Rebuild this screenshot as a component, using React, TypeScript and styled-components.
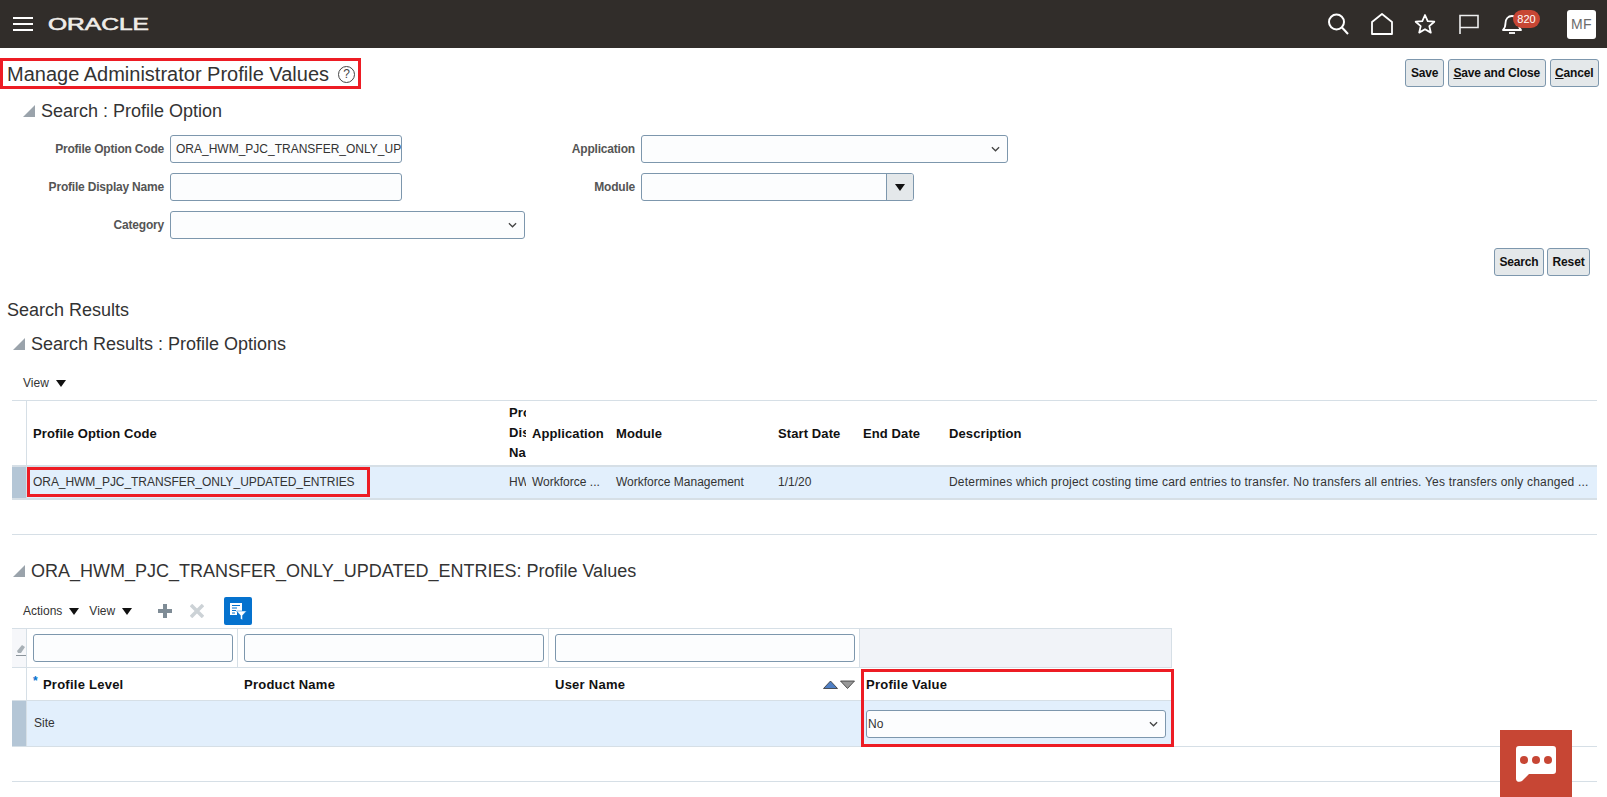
import React from "react";
import styled, { createGlobalStyle } from "styled-components";

const GlobalStyle = createGlobalStyle`
  html, body {
    margin: 0;
    padding: 0;
    background: #fff;
    font-family: "Liberation Sans", Arial, sans-serif;
    color: #333;
  }
  * { box-sizing: border-box; }
`;

const Triangle = () => (
  <DisclosureIcon viewBox="0 0 12 12">
    <polygon points="0,12 12,12 12,0" fill="#9aa3ab" />
  </DisclosureIcon>
);

const Chevron = () => (
  <ChevronIcon viewBox="0 0 10 6">
    <path d="M1 1l4 4 4-4" fill="none" stroke="#444" strokeWidth="1.4" />
  </ChevronIcon>
);

const Caret = () => (
  <CaretIcon viewBox="0 0 10 7">
    <polygon points="0,0 10,0 5,7" fill="#111" />
  </CaretIcon>
);

const App: React.FC = () => {
  return (
    <Page>
      <GlobalStyle />
      <Header>
        <Burger viewBox="0 0 20 14">
          <path d="M0 1h20M0 7h20M0 13h20" stroke="#fff" strokeWidth="1.8" />
        </Burger>
        <Logo viewBox="0 0 100 14">
          <text
            x="0"
            y="13"
            textLength="101"
            lengthAdjust="spacingAndGlyphs"
            fontFamily="Liberation Sans, Arial, sans-serif"
            fontSize="17"
            fill="#efece8"
            stroke="#efece8"
            strokeWidth=".6"
          >
            ORACLE
          </text>
        </Logo>
        <HeaderIcons>
          <HeaderIcon viewBox="0 0 22 22">
            <circle cx="9.5" cy="9" r="7.5" fill="none" stroke="#fff" strokeWidth="2" />
            <path d="M15 14.5l6 6.5" stroke="#fff" strokeWidth="2" />
          </HeaderIcon>
          <HeaderIcon viewBox="0 0 22 22">
            <path d="M1 21V9l10-8 10 8v12z" fill="none" stroke="#fff" strokeWidth="1.8" strokeLinejoin="round" />
          </HeaderIcon>
          <HeaderIcon viewBox="0 0 22 22">
            <path
              d="M11 2l2.7 6.1 6.6.6-5 4.4 1.5 6.5L11 16.200l-5.800 3.400 1.500-6.500-5-4.400 6.600-.6z"
              fill="none"
              stroke="#fff"
              strokeWidth="1.8"
              strokeLinejoin="round"
            />
          </HeaderIcon>
          <HeaderIcon viewBox="0 0 22 22">
            <path d="M2 21V2.500h18v12H2" fill="none" stroke="#eee" strokeWidth="1.6" />
          </HeaderIcon>
          <BellSlot>
            <HeaderIcon viewBox="0 0 22 22">
              <path
                d="M2 17c2-2 2.500-3.500 2.500-7 0-4 2.500-7 6.500-7s6.500 3 6.500 7c0 3.500.5 5 2.500 7z"
                fill="none"
                stroke="#fff"
                strokeWidth="1.8"
                strokeLinejoin="round"
              />
              <path d="M8 20h6" stroke="#fff" strokeWidth="1.8" />
            </HeaderIcon>
            <Badge>820</Badge>
          </BellSlot>
        </HeaderIcons>
        <Avatar>MF</Avatar>
      </Header>

      <TitleBar>
        <TitleBox>
          <Title>Manage Administrator Profile Values</Title>
          <HelpIcon>?</HelpIcon>
        </TitleBox>
        <ButtonGroup>
          <Button>Save</Button>
          <Button>
            <u>S</u>ave and Close
          </Button>
          <Button>
            <u>C</u>ancel
          </Button>
        </ButtonGroup>
      </TitleBar>

      <SearchHeading>
        <Triangle />
        <SectionTitle>Search : Profile Option</SectionTitle>
      </SearchHeading>

      <Form>
        <Label>Profile Option Code</Label>
        <Field $width={232}>
          <FieldText>ORA_HWM_PJC_TRANSFER_ONLY_UPDATED_ENTRIES</FieldText>
        </Field>
        <Label>Application</Label>
        <Field $width={367}>
          <Chevron />
        </Field>
        <Label>Profile Display Name</Label>
        <Field $width={232} />
        <Label>Module</Label>
        <Field $width={273}>
          <ComboButton>
            <Caret />
          </ComboButton>
        </Field>
        <Label>Category</Label>
        <Field $width={355}>
          <Chevron />
        </Field>
      </Form>

      <SearchActions>
        <Button>Search</Button>
        <Button>Reset</Button>
      </SearchActions>

      <ResultsTitle>Search Results</ResultsTitle>

      <ResultsHeading>
        <Triangle />
        <SectionTitle>Search Results : Profile Options</SectionTitle>
      </ResultsHeading>

      <ViewBar>
        <ToolText>View</ToolText>
        <Caret />
      </ViewBar>

      <ResultsTable>
        <ResultsRow $height={66}>
          <Selector />
          <HeadCell>Profile Option Code</HeadCell>
          <WrappedHeadCell>Profile Display Name</WrappedHeadCell>
          <HeadCell>Application</HeadCell>
          <HeadCell>Module</HeadCell>
          <HeadCell>Start Date</HeadCell>
          <HeadCell>End Date</HeadCell>
          <HeadCell>Description</HeadCell>
        </ResultsRow>
        <ResultsRow $height={33} $selected>
          <Selector $selected />
          <CodeCell>
            ORA_HWM_PJC_TRANSFER_ONLY_UPDATED_ENTRIES
            <CodeHighlight />
          </CodeCell>
          <ClippedCell>HWM Project Costing</ClippedCell>
          <DataCell>Workforce ...</DataCell>
          <DataCell>Workforce Management</DataCell>
          <DataCell>1/1/20</DataCell>
          <DataCell />
          <DescriptionCell>
            Determines which project costing time card entries to transfer. No transfers all entries. Yes transfers only changed ...
          </DescriptionCell>
        </ResultsRow>
      </ResultsTable>

      <Divider />

      <ValuesHeading>
        <Triangle />
        <SectionTitle>ORA_HWM_PJC_TRANSFER_ONLY_UPDATED_ENTRIES: Profile Values</SectionTitle>
      </ValuesHeading>

      <ValuesToolbar>
        <ToolText>Actions</ToolText>
        <Caret />
        <ViewTool>View</ViewTool>
        <Caret />
        <ToolIcon viewBox="0 0 14 14">
          <path d="M7 0v14M0 7h14" stroke="#7f8c96" strokeWidth="4" />
        </ToolIcon>
        <ToolIcon viewBox="0 0 14 14">
          <path d="M1 1l12 12M13 1L1 13" stroke="#ccd2d6" strokeWidth="3.500" />
        </ToolIcon>
        <FilterButton>
          <svg width="18" height="18" viewBox="0 0 18 18">
            <path d="M1 1h12v9H8v3H1z" fill="#fff" />
            <path d="M3 3.500h8M3 6h5M3 8.500h4M3 11h3" stroke="#0572ce" strokeWidth="1" />
            <path d="M7.500 9h10l-4 4.500V18l-2-1.200v-3.300z" fill="#fff" stroke="#0572ce" strokeWidth=".5" />
          </svg>
        </FilterButton>
      </ValuesToolbar>

      <ValuesArea>
        <ValuesTable>
          <FilterRow>
            <FilterSelector>
              <svg width="10" height="14" viewBox="0 0 10 14">
                <path d="M1 8l5-6 3 2-4 6H2z" fill="#a8b0b6" />
                <path d="M0 12.500h10" stroke="#8c959c" strokeWidth="1" />
              </svg>
            </FilterSelector>
            <FilterCell>
              <FilterInput />
            </FilterCell>
            <FilterCell>
              <FilterInput />
            </FilterCell>
            <FilterCell>
              <FilterInput />
            </FilterCell>
            <FilterBlank />
          </FilterRow>
          <ValuesRow $height={33}>
            <Selector />
            <ValuesHead>
              <Required>*</Required>Profile Level
            </ValuesHead>
            <ValuesHead>Product Name</ValuesHead>
            <UserCell>
              User Name
              <SortIcons viewBox="0 0 32 9">
                <polygon points="0.500,8.500 7.500,1 14.500,8.500" fill="#4f7fc4" stroke="#333" strokeWidth=".8" />
                <polygon points="17.500,1 31.500,1 24.500,8.500" fill="#999" stroke="#333" strokeWidth=".8" />
              </SortIcons>
            </UserCell>
            <ValuesHead>Profile Value</ValuesHead>
          </ValuesRow>
          <ValuesRow $height={45} $selected>
            <Selector $selected />
            <SiteCell>Site</SiteCell>
            <DataCell />
            <DataCell />
            <DataCell>
              <ValueSelect>
                No
                <Chevron />
              </ValueSelect>
            </DataCell>
          </ValuesRow>
          <ColumnHighlight />
        </ValuesTable>
      </ValuesArea>

      <BottomLine />

      <ChatButton>
        <svg width="40" height="36" viewBox="0 0 40 36">
          <path
            d="M3 0h34a3 3 0 0 1 3 3v22a3 3 0 0 1-3 3H13l-7 7c-2 1.500-6 1-6-2V3a3 3 0 0 1 3-3z"
            fill="#fff"
          />
          <circle cx="8" cy="14" r="4" fill="#c74634" />
          <circle cx="20" cy="14" r="4" fill="#c74634" />
          <circle cx="32" cy="14" r="4" fill="#c74634" />
        </svg>
      </ChatButton>
    </Page>
  );
};

export default App;

const Page = styled.div`
  position: relative;
  width: 1607px;
  height: 797px;
  overflow: hidden;
  background: #fff;
`;

const Header = styled.header`
  display: flex;
  align-items: center;
  height: 48px;
  padding: 0 11px 0 13px;
  background: #312d2a;
`;

const Burger = styled.svg`
  width: 20px;
  height: 14px;
`;

const Logo = styled.svg`
  width: 100px;
  height: 14px;
  margin-left: 15px;
  overflow: visible;
`;

const HeaderIcons = styled.div`
  display: flex;
  align-items: center;
  gap: 21.5px;
  margin-left: auto;
`;

const HeaderIcon = styled.svg`
  display: block;
  width: 22px;
  height: 22px;
`;

const BellSlot = styled.div`
  position: relative;
  width: 22px;
`;

const Badge = styled.span`
  position: absolute;
  top: -3px;
  left: 12px;
  width: 27px;
  height: 18px;
  border-radius: 9px;
  background: #c74634;
  color: #fff;
  font-size: 11px;
  line-height: 18px;
  text-align: center;
`;

const Avatar = styled.div`
  width: 29px;
  height: 29px;
  margin-left: 44px;
  border-radius: 3px;
  background: #fff;
  color: #6b6b6b;
  font-size: 14px;
  letter-spacing: 0.5px;
  line-height: 29px;
  text-align: center;
`;

const TitleBar = styled.div`
  display: flex;
  align-items: flex-start;
  justify-content: space-between;
  padding: 10px 8px 0 0;
`;

const TitleBox = styled.div`
  display: flex;
  align-items: center;
  width: 361px;
  height: 31px;
  padding: 1px 0 0 4px;
  border: 3px solid #ed1c24;
`;

const Title = styled.h1`
  margin: 0;
  color: #333;
  font-size: 20px;
  font-weight: 400;
  white-space: nowrap;
`;

const HelpIcon = styled.span`
  width: 17px;
  height: 17px;
  margin-left: 9px;
  border: 1.3px solid #444;
  border-radius: 50%;
  color: #444;
  font-size: 12px;
  line-height: 15px;
  text-align: center;
`;

const ButtonGroup = styled.div`
  display: flex;
  gap: 4px;
  margin-top: 1px;
`;

const Button = styled.button`
  height: 28px;
  padding: 0 4.5px;
  border: 1px solid #7d97ad;
  border-radius: 3px;
  background: #e4e8ea;
  color: #111;
  font-family: inherit;
  font-size: 12px;
  font-weight: 700;
  letter-spacing: -0.15px;
`;

const SearchHeading = styled.div`
  display: flex;
  align-items: center;
  height: 20px;
  margin-top: 12px;
  padding-left: 23px;
`;

const DisclosureIcon = styled.svg`
  flex: none;
  width: 12px;
  height: 12px;
  margin-right: 6px;
`;

const SectionTitle = styled.h2`
  margin: 0;
  color: #333;
  font-size: 18px;
  font-weight: 400;
  white-space: nowrap;
`;

const Form = styled.div`
  display: grid;
  grid-template-columns: 164px 355px 104px 1fr;
  grid-auto-rows: 28px;
  gap: 10px 6px;
  align-items: center;
  margin-top: 14px;
`;

const Label = styled.label`
  color: #555;
  font-size: 12px;
  font-weight: 700;
  letter-spacing: -0.2px;
  text-align: right;
  white-space: nowrap;
`;

const Field = styled.div<{ $width: number }>`
  display: flex;
  align-items: center;
  justify-content: flex-end;
  width: ${({ $width }) => $width}px;
  height: 28px;
  overflow: hidden;
  border: 1px solid #7d97ad;
  border-radius: 3px;
  background: #fcfdfe;
`;

const FieldText = styled.span`
  flex: 1;
  overflow: hidden;
  padding-left: 5px;
  color: #333;
  font-size: 12px;
  white-space: nowrap;
`;

const ChevronIcon = styled.svg`
  flex: none;
  width: 9px;
  height: 6px;
  margin: 0 7px 0 auto;
`;

const ComboButton = styled.div`
  display: flex;
  align-items: center;
  justify-content: center;
  width: 27px;
  height: 100%;
  border-left: 1px solid #7d97ad;
  background: #e4e8ea;
`;

const CaretIcon = styled.svg`
  flex: none;
  width: 10px;
  height: 7px;
`;

const SearchActions = styled.div`
  display: flex;
  justify-content: flex-end;
  gap: 3px;
  margin-top: 9px;
  padding-right: 17px;
`;

const ResultsTitle = styled.div`
  margin-top: 24px;
  padding-left: 7px;
  color: #333;
  font-size: 18px;
  line-height: 20px;
`;

const ResultsHeading = styled.div`
  display: flex;
  align-items: center;
  height: 20px;
  margin-top: 14px;
  padding-left: 13px;
`;

const ViewBar = styled.div`
  display: flex;
  align-items: center;
  gap: 7px;
  height: 20px;
  margin-top: 19px;
  padding-left: 23px;
`;

const ToolText = styled.span`
  color: #333;
  font-size: 12px;
`;

const ResultsTable = styled.div`
  width: 1585px;
  margin: 7px 0 0 12px;
  border-top: 1px solid #d6dfe6;
`;

const ResultsRow = styled.div<{ $height: number; $selected?: boolean }>`
  display: grid;
  grid-template-columns: 15px 476px 23px 84px 162px 85px 86px 654px;
  align-items: start;
  height: ${({ $height }) => $height}px;
  border-bottom: 2px solid #d6dfe6;
  background: ${({ $selected }) => ($selected ? "#e2effc" : "#fff")};
`;

const Selector = styled.div<{ $selected?: boolean }>`
  align-self: stretch;
  border-right: 1px solid #d6dfe6;
  background: ${({ $selected }) => ($selected ? "#b4c6d6" : "#fff")};
`;

const HeadCell = styled.div`
  display: flex;
  align-items: center;
  align-self: stretch;
  padding-left: 6px;
  color: #111;
  font-size: 13px;
  font-weight: 700;
  letter-spacing: 0.1px;
  white-space: nowrap;
`;

const ValuesHead = styled(HeadCell)`
  letter-spacing: 0.25px;
`;

const WrappedHeadCell = styled(HeadCell)`
  overflow: hidden;
  padding-right: 0;
  line-height: 20px;
  white-space: normal;
`;

const UserCell = styled(ValuesHead)`
  justify-content: space-between;
  padding-right: 5px;
`;

const SortIcons = styled.svg`
  width: 32px;
  height: 9px;
`;

const Required = styled.span`
  align-self: flex-start;
  margin: 7px 5px 0 0;
  color: #0572ce;
  font-size: 12px;
  line-height: 12px;
`;

const DataCell = styled.div`
  position: relative;
  min-width: 0;
  overflow: hidden;
  padding: 0 8px 0 6px;
  color: #333;
  font-size: 12px;
  line-height: 30px;
  white-space: nowrap;
`;

const SiteCell = styled(DataCell)`
  padding: 0 8px 2px 7px;
`;

const CodeCell = styled(DataCell)`
  letter-spacing: -0.05px;
`;

const DescriptionCell = styled(DataCell)`
  letter-spacing: 0.2px;
`;

const ClippedCell = styled(DataCell)`
  padding-right: 0;
`;

const CodeHighlight = styled.span`
  position: absolute;
  top: 0;
  left: 0;
  width: 343px;
  height: 30px;
  border: 3px solid #ed1c24;
`;

const Divider = styled.div`
  width: 1585px;
  height: 1px;
  margin: 34px 0 0 12px;
  background: #d6dfe6;
`;

const ValuesHeading = styled(ResultsHeading)`
  margin-top: 26px;
  padding-left: 13px;
`;

const ValuesToolbar = styled.div`
  display: flex;
  align-items: center;
  height: 28px;
  margin-top: 16px;
  padding-left: 23px;

  & > ${CaretIcon} {
    margin-left: 7px;
  }
`;

const ViewTool = styled(ToolText)`
  margin-left: 10px;
`;

const ToolIcon = styled.svg`
  width: 14px;
  height: 14px;
  margin-left: 18px;

  ${CaretIcon} + & {
    margin-left: 26px;
  }
`;

const FilterButton = styled.div`
  display: flex;
  align-items: center;
  justify-content: center;
  width: 28px;
  height: 28px;
  margin-left: 20px;
  border-radius: 2px;
  background: #0572ce;
`;

const ValuesArea = styled.div`
  width: 1585px;
  margin: 3px 0 0 12px;
  border-bottom: 1px solid #d6dfe6;
`;

const ValuesTable = styled.div`
  position: relative;
  width: 1160px;
`;

const FilterRow = styled.div`
  display: grid;
  grid-template-columns: 15px 211px 311px 311px 312px;
  height: 40px;
  border-top: 1px solid #d6dfe6;
  border-bottom: 1px solid #d6dfe6;
`;

const FilterSelector = styled.div`
  display: flex;
  align-items: center;
  justify-content: flex-end;
  padding-top: 4px;
  border-right: 1px solid #d6dfe6;
  background: #f6f7fa;
`;

const FilterCell = styled.div`
  display: flex;
  align-items: center;
  padding: 0 4px 0 6px;
  border-right: 1px solid #d6dfe6;
`;

const FilterInput = styled.div`
  width: 100%;
  height: 28px;
  border: 1px solid #7d97ad;
  border-radius: 3px;
  background: #fcfdfe;
`;

const FilterBlank = styled.div`
  border-right: 1px solid #d6dfe6;
  background: #f1f3f8;
`;

const ValuesRow = styled.div<{ $height: number; $selected?: boolean }>`
  display: grid;
  grid-template-columns: 15px 211px 311px 311px 312px;
  align-items: center;
  height: ${({ $height }) => $height}px;
  border-bottom: ${({ $selected }) => ($selected ? "0" : "1px solid #d6dfe6")};
  background: ${({ $selected }) => ($selected ? "#e2effc" : "#fff")};
`;

const ValueSelect = styled.div`
  display: flex;
  align-items: center;
  width: 300px;
  height: 28px;
  padding-left: 1px;
  border: 1px solid #7d97ad;
  border-radius: 3px;
  background: #fcfdfe;
  color: #333;
  font-size: 12px;
  line-height: 26px;
`;

const ColumnHighlight = styled.div`
  position: absolute;
  top: 41px;
  left: 849px;
  width: 313px;
  height: 78px;
  border: 3px solid #ed1c24;
`;

const BottomLine = styled.div`
  width: 1585px;
  height: 1px;
  margin: 34px 0 0 12px;
  background: #d6dfe6;
`;

const ChatButton = styled.div`
  position: absolute;
  right: 35px;
  bottom: 0;
  display: flex;
  align-items: center;
  justify-content: center;
  width: 72px;
  height: 67px;
  background: #c74634;
`;
